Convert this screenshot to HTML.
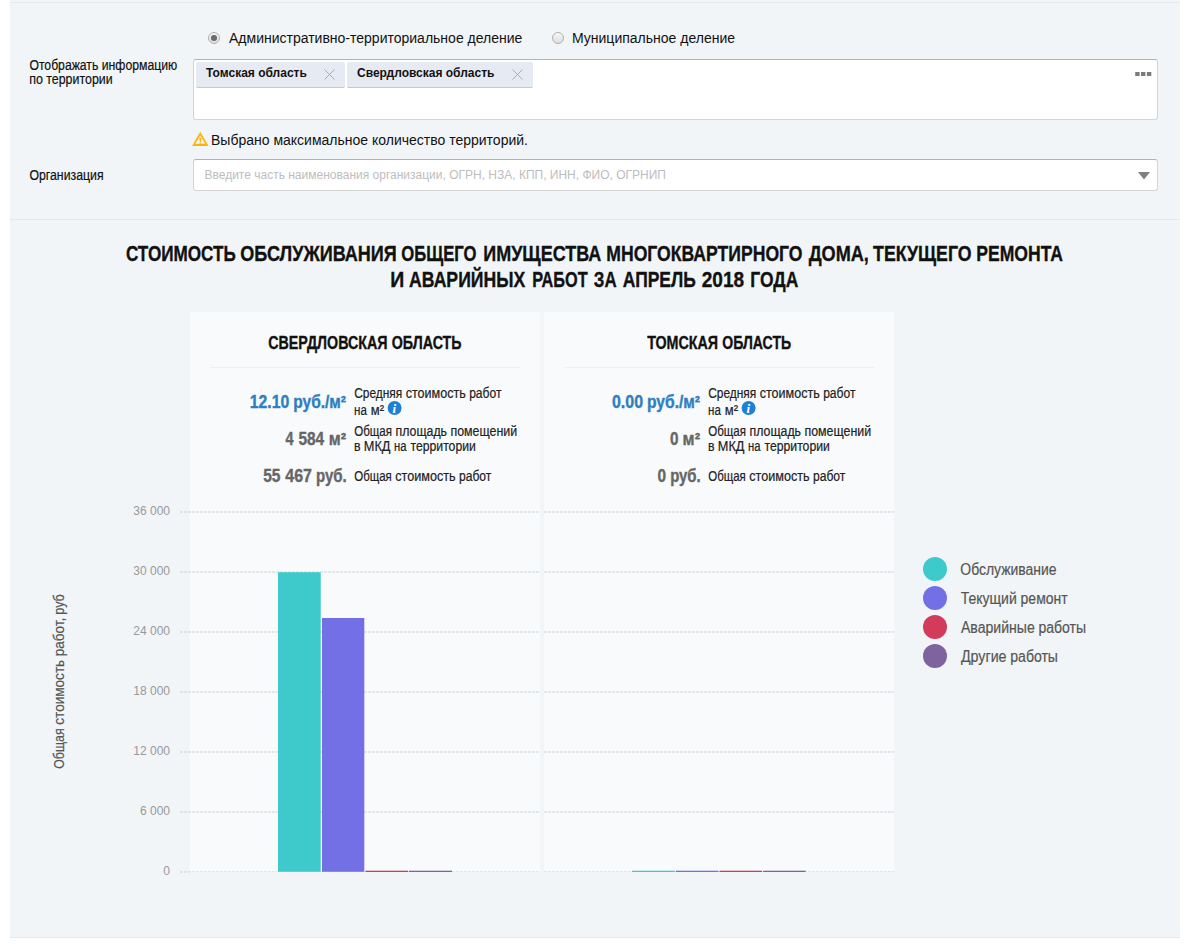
<!DOCTYPE html>
<html lang="ru"><head><meta charset="utf-8"><title>Стоимость обслуживания общего имущества</title>
<style>
html,body{margin:0;padding:0;background:#fff}
body{width:1189px;height:946px;position:relative;overflow:hidden;font-family:"Liberation Sans",sans-serif;color:#111}
.panel{position:absolute;left:10px;top:0;width:1170px;height:938px;background:#f1f5f8}
.hl{position:absolute;left:0;width:1170px;height:1px;background:#e4e9ee}
.abs{position:absolute;white-space:nowrap}
.radio{position:absolute;width:10px;height:10px;border:1px solid #b0b0b0;border-radius:50%;background:linear-gradient(#f6f6f6,#dedede)}
.radio.on::after{content:"";position:absolute;left:2.2px;top:2.2px;width:5.6px;height:5.6px;border-radius:50%;background:#6b6b6b}
.box{position:absolute;background:#fff;border:1px solid #d4d4d4;border-top-color:#b3b3b3;border-radius:3px;box-sizing:border-box}
.tag{position:absolute;top:2px;height:26px;box-sizing:border-box;background:#e6eaf2;border-bottom:1px solid #c5c8ce;border-radius:2px;font-size:12px;font-weight:bold;line-height:22px;padding-left:10px;color:#111}
.tag svg{position:absolute;right:10px;top:7px}
svg text{font-family:"Liberation Sans",sans-serif}
svg text.ii{font-family:"Liberation Serif",serif}
</style></head>
<body>
<div class="panel">
  <div class="hl" style="top:2px"></div>
  <div class="hl" style="top:219px"></div>
  <div class="hl" style="top:937px"></div>
</div>

<span class="radio on" style="left:208px;top:32px"></span>
<div class="abs" style="left:229px;top:30px;font-size:14px;line-height:16px">Административно-территориальное деление</div>
<span class="radio" style="left:552px;top:32px"></span>
<div class="abs" style="left:572px;top:30px;font-size:14px;line-height:16px">Муниципальное деление</div>

<div class="box" style="left:193px;top:59px;width:965px;height:61px">
  <div class="tag" style="left:2px;width:149px">Томская область<svg width="11" height="11" viewBox="0 0 11 11"><path d="M0.5 0.5L10.5 10.5M10.5 0.5L0.5 10.5" stroke="#a9adb3" stroke-width="1" fill="none"/></svg></div>
  <div class="tag" style="left:153px;width:186px">Свердловская область<svg width="11" height="11" viewBox="0 0 11 11"><path d="M0.5 0.5L10.5 10.5M10.5 0.5L0.5 10.5" stroke="#a9adb3" stroke-width="1" fill="none"/></svg></div>
  <svg class="abs" style="left:941px;top:12px" width="18" height="6"><rect x="0.2" y="0" width="4.4" height="4" fill="#7b7b7b"/><rect x="6" y="0" width="4.4" height="4" fill="#7b7b7b"/><rect x="11.9" y="0" width="4.4" height="4" fill="#7b7b7b"/></svg>
</div>

<svg class="abs" style="left:190px;top:130px" width="20" height="18" viewBox="190 130 20 18"><path fill-rule="evenodd" fill="#ffb400" d="M200.3 131.7L208.5 146.1H192.1ZM200.3 135.4L195.3 143.7H205.3Z"/><path fill="#ffb400" d="M199.3 138H201.3L200.8 142.1H199.8ZM199.6 142.6H201V143.7H199.6Z"/></svg>
<div class="abs" style="left:211px;top:132px;font-size:14px;line-height:16px">Выбрано максимальное количество территорий.</div>

<div class="box" style="left:193px;top:159px;width:965px;height:32px">
  <div class="abs" style="left:10.5px;top:8px;font-size:12px;line-height:14px;color:#bdbdbd">Введите часть наименования организации, ОГРН, НЗА, КПП, ИНН, ФИО, ОГРНИП</div>
  <svg class="abs" style="left:944px;top:12px" width="12" height="8"><path d="M0 0H12L6 7.6Z" fill="#808080"/></svg>
</div>

<svg class="abs" style="left:0;top:0" width="1189" height="946" viewBox="0 0 1189 946">
<text y="260.5" font-size="22" font-weight="bold" fill="#111" stroke="#111" stroke-width="0.35"><tspan x="125.91" textLength="109.90" lengthAdjust="spacingAndGlyphs">СТОИМОСТЬ</tspan> <tspan x="240.17" textLength="156.63" lengthAdjust="spacingAndGlyphs">ОБСЛУЖИВАНИЯ</tspan> <tspan x="401.32" textLength="75.18" lengthAdjust="spacingAndGlyphs">ОБЩЕГО</tspan> <tspan x="483.22" textLength="118.15" lengthAdjust="spacingAndGlyphs">ИМУЩЕСТВА</tspan> <tspan x="606.33" textLength="196.20" lengthAdjust="spacingAndGlyphs">МНОГОКВАРТИРНОГО</tspan> <tspan x="808.64" textLength="60.27" lengthAdjust="spacingAndGlyphs">ДОМА,</tspan> <tspan x="873.10" textLength="98.45" lengthAdjust="spacingAndGlyphs">ТЕКУЩЕГО</tspan> <tspan x="976.24" textLength="86.82" lengthAdjust="spacingAndGlyphs">РЕМОНТА</tspan></text>
<text y="286.5" font-size="22" font-weight="bold" fill="#111" stroke="#111" stroke-width="0.35"><tspan x="390.21" textLength="14.00" lengthAdjust="spacingAndGlyphs">И</tspan> <tspan x="409.06" textLength="116.19" lengthAdjust="spacingAndGlyphs">АВАРИЙНЫХ</tspan> <tspan x="532.14" textLength="55.53" lengthAdjust="spacingAndGlyphs">РАБОТ</tspan> <tspan x="593.82" textLength="22.83" lengthAdjust="spacingAndGlyphs">ЗА</tspan> <tspan x="622.77" textLength="73.05" lengthAdjust="spacingAndGlyphs">АПРЕЛЬ</tspan> <tspan x="701.74" textLength="42.45" lengthAdjust="spacingAndGlyphs">2018</tspan> <tspan x="750.24" textLength="48.01" lengthAdjust="spacingAndGlyphs">ГОДА</tspan></text>
<rect x="190" y="312" width="350" height="560" fill="#f9fafc"/>
<rect x="210" y="367" width="310" height="1" fill="#eef0f3"/>
<rect x="544" y="312" width="350" height="560" fill="#f9fafc"/>
<rect x="564" y="367" width="310" height="1" fill="#eef0f3"/>
<line x1="180" y1="512" x2="894" y2="512" stroke="#cdd1d8" stroke-width="1" stroke-dasharray="3 1"/>
<line x1="180" y1="572" x2="894" y2="572" stroke="#cdd1d8" stroke-width="1" stroke-dasharray="3 1"/>
<line x1="180" y1="632" x2="894" y2="632" stroke="#cdd1d8" stroke-width="1" stroke-dasharray="3 1"/>
<line x1="180" y1="692" x2="894" y2="692" stroke="#cdd1d8" stroke-width="1" stroke-dasharray="3 1"/>
<line x1="180" y1="752" x2="894" y2="752" stroke="#cdd1d8" stroke-width="1" stroke-dasharray="3 1"/>
<line x1="180" y1="812" x2="894" y2="812" stroke="#cdd1d8" stroke-width="1" stroke-dasharray="3 1"/>
<line x1="180" y1="872" x2="894" y2="872" stroke="#cdd1d8" stroke-width="1" stroke-dasharray="3 1"/>
<rect x="540" y="312" width="4" height="560" fill="#f1f5f8"/>
<text x="170" y="514.7" font-size="12" font-weight="normal" fill="#999" text-anchor="end">36 000</text>
<text x="170" y="574.7" font-size="12" font-weight="normal" fill="#999" text-anchor="end">30 000</text>
<text x="170" y="634.7" font-size="12" font-weight="normal" fill="#999" text-anchor="end">24 000</text>
<text x="170" y="694.7" font-size="12" font-weight="normal" fill="#999" text-anchor="end">18 000</text>
<text x="170" y="754.7" font-size="12" font-weight="normal" fill="#999" text-anchor="end">12 000</text>
<text x="170" y="814.7" font-size="12" font-weight="normal" fill="#999" text-anchor="end">6 000</text>
<text x="170" y="874.7" font-size="12" font-weight="normal" fill="#999" text-anchor="end">0</text>
<rect x="278" y="572.2" width="42.7" height="299.6" fill="#3ec9cb"/>
<rect x="322" y="618" width="42.3" height="253.8" fill="#7370e6"/>
<rect x="365.5" y="870.7" width="42.6" height="1.3" fill="#d23c5a"/>
<rect x="409" y="870.7" width="43" height="1.3" fill="#7f639f"/>
<rect x="632.10" y="870.7" width="42.6" height="1.3" fill="#3ec9cb"/>
<rect x="675.77" y="870.7" width="42.6" height="1.3" fill="#7370e6"/>
<rect x="719.44" y="870.7" width="42.6" height="1.3" fill="#d23c5a"/>
<rect x="763.11" y="870.7" width="42.6" height="1.3" fill="#7f639f"/>
<rect x="190" y="872" width="704" height="2" fill="#f1f5f8"/>
<text y="348.8" font-size="18" font-weight="bold" fill="#111" stroke="#111" stroke-width="0.35"><tspan x="268.22" textLength="119.33" lengthAdjust="spacingAndGlyphs">СВЕРДЛОВСКАЯ</tspan> <tspan x="391.78" textLength="69.72" lengthAdjust="spacingAndGlyphs">ОБЛАСТЬ</tspan></text>
<text y="348.8" font-size="18" font-weight="bold" fill="#111" stroke="#111" stroke-width="0.35"><tspan x="647.14" textLength="71.02" lengthAdjust="spacingAndGlyphs">ТОМСКАЯ</tspan> <tspan x="722.31" textLength="68.79" lengthAdjust="spacingAndGlyphs">ОБЛАСТЬ</tspan></text>
<text y="407.8" font-size="17.5" font-weight="bold" fill="#2e7ec1" stroke="#2e7ec1" stroke-width="0.35"><tspan x="249.71" textLength="39.52" lengthAdjust="spacingAndGlyphs">12.10</tspan> <tspan x="293.23" textLength="52.80" lengthAdjust="spacingAndGlyphs">руб./м²</tspan></text>
<text y="444.7" font-size="17.5" font-weight="bold" fill="#666" stroke="#666" stroke-width="0.35"><tspan x="285.48" textLength="8.03" lengthAdjust="spacingAndGlyphs">4</tspan> <tspan x="298.43" textLength="25.79" lengthAdjust="spacingAndGlyphs">584</tspan> <tspan x="328.71" textLength="17.33" lengthAdjust="spacingAndGlyphs">м²</tspan></text>
<text y="481.7" font-size="17.5" font-weight="bold" fill="#666" stroke="#666" stroke-width="0.35"><tspan x="263.22" textLength="17.31" lengthAdjust="spacingAndGlyphs">55</tspan> <tspan x="285.28" textLength="26.64" lengthAdjust="spacingAndGlyphs">467</tspan> <tspan x="316.00" textLength="30.73" lengthAdjust="spacingAndGlyphs">руб.</tspan></text>
<text y="398" font-size="14" font-weight="normal" fill="#222" stroke="#222" stroke-width="0.2"><tspan x="354.20" textLength="48.01" lengthAdjust="spacingAndGlyphs">Средняя</tspan> <tspan x="405.64" textLength="60.15" lengthAdjust="spacingAndGlyphs">стоимость</tspan> <tspan x="469.15" textLength="32.35" lengthAdjust="spacingAndGlyphs">работ</tspan></text>
<text y="414.7" font-size="14" font-weight="normal" fill="#222" stroke="#222" stroke-width="0.2"><tspan x="354.00" textLength="12.81" lengthAdjust="spacingAndGlyphs">на</tspan> <tspan x="370.85" textLength="13.20" lengthAdjust="spacingAndGlyphs">м²</tspan></text>
<text y="436.3" font-size="14" font-weight="normal" fill="#222" stroke="#222" stroke-width="0.2"><tspan x="354.25" textLength="37.80" lengthAdjust="spacingAndGlyphs">Общая</tspan> <tspan x="395.58" textLength="51.42" lengthAdjust="spacingAndGlyphs">площадь</tspan> <tspan x="450.45" textLength="66.71" lengthAdjust="spacingAndGlyphs">помещений</tspan></text>
<text y="450.5" font-size="14" font-weight="normal" fill="#222" stroke="#222" stroke-width="0.2"><tspan x="353.95" textLength="6.53" lengthAdjust="spacingAndGlyphs">в</tspan> <tspan x="363.77" textLength="26.67" lengthAdjust="spacingAndGlyphs">МКД</tspan> <tspan x="393.98" textLength="12.51" lengthAdjust="spacingAndGlyphs">на</tspan> <tspan x="410.48" textLength="65.37" lengthAdjust="spacingAndGlyphs">территории</tspan></text>
<text y="481" font-size="14" font-weight="normal" fill="#222" stroke="#222" stroke-width="0.2"><tspan x="354.26" textLength="37.52" lengthAdjust="spacingAndGlyphs">Общая</tspan> <tspan x="395.24" textLength="60.34" lengthAdjust="spacingAndGlyphs">стоимость</tspan> <tspan x="458.95" textLength="32.45" lengthAdjust="spacingAndGlyphs">работ</tspan></text>
<circle cx="394.6" cy="408" r="7" fill="#1f7fd4"/>
<text x="394.4" y="412.6" font-size="13" font-weight="bold" font-style="italic" class="ii" fill="#fff" text-anchor="middle">i</text>
<text y="407.8" font-size="17.5" font-weight="bold" fill="#2e7ec1" stroke="#2e7ec1" stroke-width="0.35"><tspan x="611.97" textLength="31.06" lengthAdjust="spacingAndGlyphs">0.00</tspan> <tspan x="647.04" textLength="52.99" lengthAdjust="spacingAndGlyphs">руб./м²</tspan></text>
<text y="444.7" font-size="17.5" font-weight="bold" fill="#666" stroke="#666" stroke-width="0.35"><tspan x="669.89" textLength="8.54" lengthAdjust="spacingAndGlyphs">0</tspan> <tspan x="682.61" textLength="17.44" lengthAdjust="spacingAndGlyphs">м²</tspan></text>
<text y="481.7" font-size="17.5" font-weight="bold" fill="#666" stroke="#666" stroke-width="0.35"><tspan x="657.39" textLength="8.55" lengthAdjust="spacingAndGlyphs">0</tspan> <tspan x="670.14" textLength="30.58" lengthAdjust="spacingAndGlyphs">руб.</tspan></text>
<text y="398" font-size="14" font-weight="normal" fill="#222" stroke="#222" stroke-width="0.2"><tspan x="708.20" textLength="48.01" lengthAdjust="spacingAndGlyphs">Средняя</tspan> <tspan x="759.64" textLength="60.15" lengthAdjust="spacingAndGlyphs">стоимость</tspan> <tspan x="823.15" textLength="32.35" lengthAdjust="spacingAndGlyphs">работ</tspan></text>
<text y="414.7" font-size="14" font-weight="normal" fill="#222" stroke="#222" stroke-width="0.2"><tspan x="708.00" textLength="12.81" lengthAdjust="spacingAndGlyphs">на</tspan> <tspan x="724.85" textLength="13.20" lengthAdjust="spacingAndGlyphs">м²</tspan></text>
<text y="436.3" font-size="14" font-weight="normal" fill="#222" stroke="#222" stroke-width="0.2"><tspan x="708.25" textLength="37.80" lengthAdjust="spacingAndGlyphs">Общая</tspan> <tspan x="749.58" textLength="51.42" lengthAdjust="spacingAndGlyphs">площадь</tspan> <tspan x="804.45" textLength="66.71" lengthAdjust="spacingAndGlyphs">помещений</tspan></text>
<text y="450.5" font-size="14" font-weight="normal" fill="#222" stroke="#222" stroke-width="0.2"><tspan x="707.95" textLength="6.53" lengthAdjust="spacingAndGlyphs">в</tspan> <tspan x="717.77" textLength="26.67" lengthAdjust="spacingAndGlyphs">МКД</tspan> <tspan x="747.98" textLength="12.51" lengthAdjust="spacingAndGlyphs">на</tspan> <tspan x="764.48" textLength="65.37" lengthAdjust="spacingAndGlyphs">территории</tspan></text>
<text y="481" font-size="14" font-weight="normal" fill="#222" stroke="#222" stroke-width="0.2"><tspan x="708.26" textLength="37.52" lengthAdjust="spacingAndGlyphs">Общая</tspan> <tspan x="749.24" textLength="60.34" lengthAdjust="spacingAndGlyphs">стоимость</tspan> <tspan x="812.95" textLength="32.45" lengthAdjust="spacingAndGlyphs">работ</tspan></text>
<circle cx="748.6" cy="408" r="7" fill="#1f7fd4"/>
<text x="748.4" y="412.6" font-size="13" font-weight="bold" font-style="italic" class="ii" fill="#fff" text-anchor="middle">i</text>
<text y="0" font-size="15" font-weight="normal" fill="#555" transform="translate(63.8,681.5) rotate(-90)" stroke="#555" stroke-width="0.2"><tspan x="-87.28" textLength="40.34" lengthAdjust="spacingAndGlyphs">Общая</tspan> <tspan x="-43.21" textLength="64.88" lengthAdjust="spacingAndGlyphs">стоимость</tspan> <tspan x="25.30" textLength="38.45" lengthAdjust="spacingAndGlyphs">работ,</tspan> <tspan x="66.81" textLength="20.42" lengthAdjust="spacingAndGlyphs">руб</tspan></text>
<circle cx="935" cy="569" r="12" fill="#3ec9cb"/>
<text y="575" font-size="16" font-weight="normal" fill="#555" stroke="#555" stroke-width="0.2"><tspan x="960.34" textLength="96.28" lengthAdjust="spacingAndGlyphs">Обслуживание</tspan></text>
<circle cx="935" cy="598" r="12" fill="#7370e6"/>
<text y="604" font-size="16" font-weight="normal" fill="#555" stroke="#555" stroke-width="0.2"><tspan x="960.69" textLength="56.07" lengthAdjust="spacingAndGlyphs">Текущий</tspan> <tspan x="1020.60" textLength="47.04" lengthAdjust="spacingAndGlyphs">ремонт</tspan></text>
<circle cx="935" cy="627" r="12" fill="#d23c5a"/>
<text y="633" font-size="16" font-weight="normal" fill="#555" stroke="#555" stroke-width="0.2"><tspan x="960.97" textLength="73.78" lengthAdjust="spacingAndGlyphs">Аварийные</tspan> <tspan x="1038.46" textLength="47.50" lengthAdjust="spacingAndGlyphs">работы</tspan></text>
<circle cx="935" cy="656" r="12" fill="#7f639f"/>
<text y="662" font-size="16" font-weight="normal" fill="#555" stroke="#555" stroke-width="0.2"><tspan x="960.90" textLength="45.63" lengthAdjust="spacingAndGlyphs">Другие</tspan> <tspan x="1010.25" textLength="47.72" lengthAdjust="spacingAndGlyphs">работы</tspan></text>
<text y="70" font-size="14" font-weight="normal" fill="#111" stroke="#111" stroke-width="0.2"><tspan x="29.43" textLength="68.86" lengthAdjust="spacingAndGlyphs">Отображать</tspan> <tspan x="101.73" textLength="75.59" lengthAdjust="spacingAndGlyphs">информацию</tspan></text>
<text y="84" font-size="14" font-weight="normal" fill="#111" stroke="#111" stroke-width="0.2"><tspan x="29.13" textLength="13.71" lengthAdjust="spacingAndGlyphs">по</tspan> <tspan x="46.28" textLength="66.38" lengthAdjust="spacingAndGlyphs">территории</tspan></text>
<text y="180" font-size="14" font-weight="normal" fill="#111" stroke="#111" stroke-width="0.2"><tspan x="29.42" textLength="74.13" lengthAdjust="spacingAndGlyphs">Организация</tspan></text>
</svg>
</body></html>
